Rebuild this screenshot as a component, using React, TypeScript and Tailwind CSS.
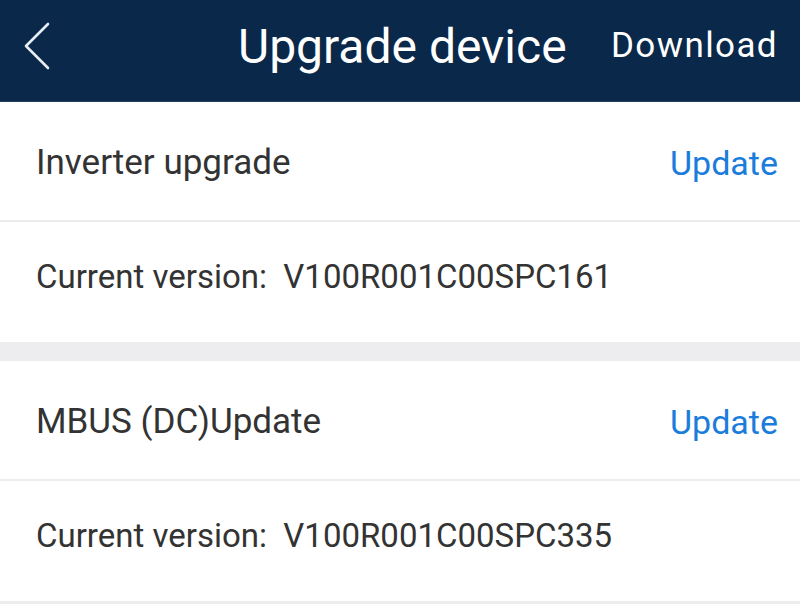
import React from "react";

type Item = { title: string; version: string };

const items: Item[] = [
  { title: "Inverter upgrade", version: "V100R001C00SPC161" },
  { title: "MBUS (DC)Update", version: "V100R001C00SPC335" },
];

function BackIcon() {
  return (
    <svg width="30" height="48" viewBox="0 0 30 48" fill="none">
      <path d="M26 2 L4 24 L26 46" stroke="#e8edf3" strokeWidth="2.6" strokeLinecap="round" strokeLinejoin="round" />
    </svg>
  );
}

export default function App() {
  return (
    <div className="flex h-[604px] w-[800px] flex-col overflow-hidden bg-[#ededf0] font-['Roboto',sans-serif]">
      {/* Header */}
      <header className="flex h-[102px] shrink-0 items-center border-b border-[#24405e] bg-[#0a2849] pl-[22px] pr-[22px] text-white">
        <div className="flex w-[60px] shrink-0 items-center pb-[10px]">
          <BackIcon />
        </div>
        <div className="flex-1 whitespace-nowrap pb-[8px] pl-[156px] text-[48px] leading-none">Upgrade device</div>
        <div className="shrink-0 pb-[10px] text-[35px] leading-none tracking-[1.4px]">Download</div>
      </header>

      {items.map((item, i) => (
        <section key={item.title} className={i > 0 ? "mt-[19px] shrink-0 bg-white" : "shrink-0 bg-white"}>
          <div className="flex h-[120px] items-center justify-between border-b-2 border-[#ececec] pl-[36px] pr-[22px] pt-[4px]">
            <span className="text-[35px] text-[#333333]">{item.title}</span>
            <span className="text-[34px] text-[#1a7ddb]">Update</span>
          </div>
          <div className="flex h-[120px] items-center pl-[36px] pb-[10px] text-[33px] text-[#333333]">
            Current version:&nbsp; {item.version}
          </div>
        </section>
      ))}
    </div>
  );
}
